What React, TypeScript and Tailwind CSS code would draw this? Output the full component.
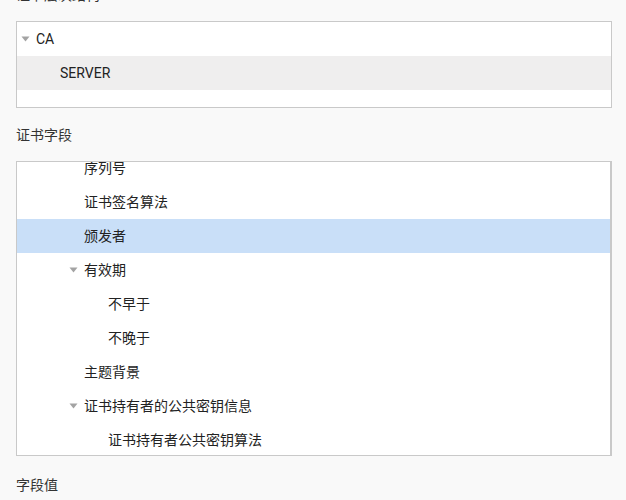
import type { ReactNode } from "react";

interface TreeRow {
  label: string;
  level: number;
  expanded?: boolean;
  selected?: boolean;
  hover?: boolean;
}

const hierarchy: TreeRow[] = [
  { label: "CA", level: 0, expanded: true },
  { label: "SERVER", level: 1, hover: true },
];

const fields: TreeRow[] = [
  { label: "序列号", level: 2 },
  { label: "证书签名算法", level: 2 },
  { label: "颁发者", level: 2, selected: true },
  { label: "有效期", level: 2, expanded: true },
  { label: "不早于", level: 3 },
  { label: "不晚于", level: 3 },
  { label: "主题背景", level: 2 },
  { label: "证书持有者的公共密钥信息", level: 2, expanded: true },
  { label: "证书持有者公共密钥算法", level: 3 },
];

const Caret = () => (
  <svg width="9" height="6" viewBox="0 0 9 6" className="shrink-0">
    <path d="M0.5 0.5 L8.5 0.5 L4.5 5.5 Z" fill="#a3a3a3" />
  </svg>
);

const Row = ({ row }: { row: TreeRow }) => {
  const bg = row.selected ? "bg-[#c9dff8]" : row.hover ? "bg-[#efeeee]" : "";
  return (
    <div
      className={`flex h-[34px] items-center ${bg}`}
      style={{ paddingLeft: 4 + row.level * 24 }}
    >
      <div className="flex w-[15px] items-center">{row.expanded && <Caret />}</div>
      <span className="text-[14px] text-[#222]">{row.label}</span>
    </div>
  );
};

const Label = ({ children, className = "" }: { children: ReactNode; className?: string }) => (
  <div className={`h-5 leading-5 text-[14px] text-[#333] ${className}`}>{children}</div>
);

export default function App() {
  return (
    <div
      className="h-[500px] overflow-hidden bg-[#f9f9f9] px-4"
      style={{ fontFamily: 'Roboto, "Noto Sans CJK SC", sans-serif' }}
    >
      <Label className="-mt-[15px] mb-4">证书层次结构</Label>
      <div className="w-[596px] h-[87px] border border-[#c9c9c9] bg-white">
        {hierarchy.map((r) => (
          <Row key={r.label} row={r} />
        ))}
      </div>

      <Label className="mt-[17px] mb-4">证书字段</Label>
      <div className="w-[596px] h-[295px] overflow-hidden border border-[#c9c9c9] border-r-2 bg-white">
        <div className="-mt-[11px]">
          {fields.map((r) => (
            <Row key={r.label} row={r} />
          ))}
        </div>
      </div>

      <Label className="mt-[19px]">字段值</Label>
    </div>
  );
}
